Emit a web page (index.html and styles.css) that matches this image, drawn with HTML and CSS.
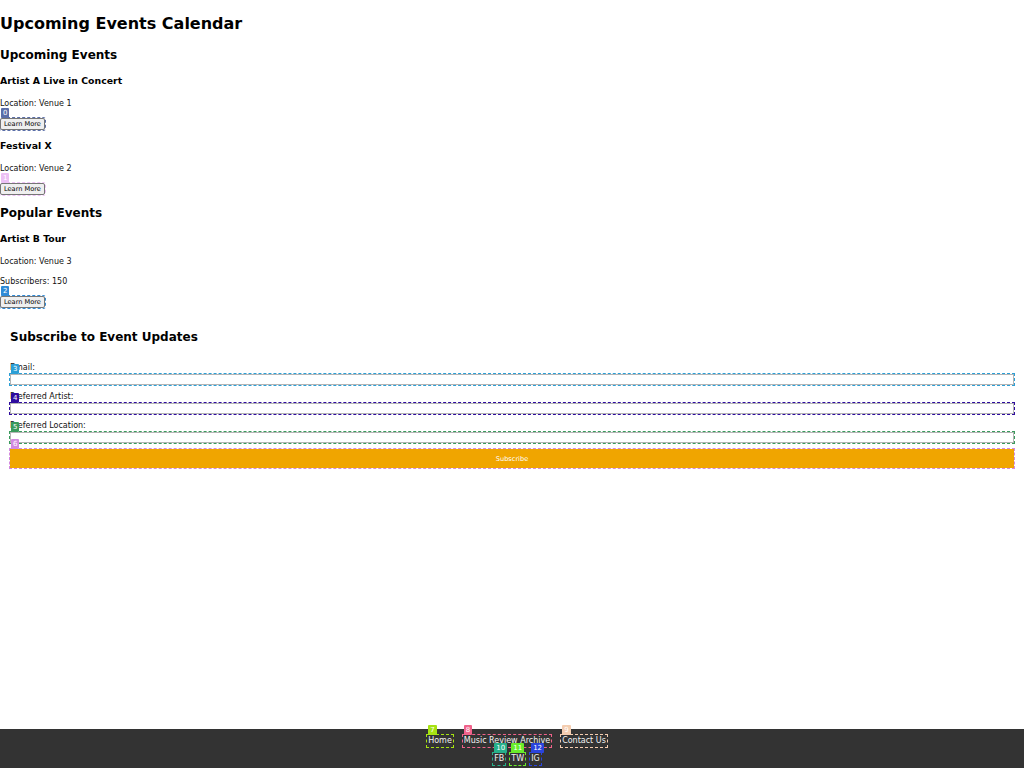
FILE: index.html
```html
<!DOCTYPE html>
<html lang="en">
<head>
<meta charset="utf-8">
<title>Upcoming Events Calendar</title>
<link rel="stylesheet" href="styles.css">
</head>
<body>
<div class="page">
<header class="page-header">
  <h1 class="title">Upcoming Events Calendar</h1>
</header>
<main class="content">
  <section class="events">
    <h2 class="section-title">Upcoming Events</h2>
    <div class="event">
      <h3 class="event-title">Artist A Live in Concert</h3>
      <p class="event-info">Location: Venue 1</p>
      <div class="mark m0"><button class="btn tgt" type="button">Learn More</button><span class="badge">0</span></div>
    </div>
    <div class="event">
      <h3 class="event-title">Festival X</h3>
      <p class="event-info">Location: Venue 2</p>
      <div class="mark m1"><button class="btn tgt" type="button">Learn More</button><span class="badge">1</span></div>
    </div>
  </section>
  <section class="events">
    <h2 class="section-title">Popular Events</h2>
    <div class="event">
      <h3 class="event-title">Artist B Tour</h3>
      <p class="event-info">Location: Venue 3</p>
      <p class="event-info">Subscribers: 150</p>
      <div class="mark m2"><button class="btn tgt" type="button">Learn More</button><span class="badge">2</span></div>
    </div>
  </section>
  <section class="subscribe">
    <h2 class="section-title">Subscribe to Event Updates</h2>
    <form class="sub-form">
      <label class="field-label" for="email">Email:</label>
      <div class="mark field m3"><input class="field-input tgt" id="email" type="email"><span class="badge">3</span></div>
      <label class="field-label" for="artist">Preferred Artist:</label>
      <div class="mark field m4"><input class="field-input tgt" id="artist" type="text"><span class="badge">4</span></div>
      <label class="field-label" for="location">Preferred Location:</label>
      <div class="mark field m5"><input class="field-input tgt" id="location" type="text"><span class="badge">5</span></div>
      <div class="mark field m6"><button class="submit tgt" type="button">Subscribe</button><span class="badge">6</span></div>
    </form>
  </section>
</main>
</div>
<footer class="page-footer">
  <nav class="foot-links">
    <span class="mark m7"><a class="foot-link tgt" href="#">Home</a><span class="badge">7</span></span>
    <span class="mark m8"><a class="foot-link tgt" href="#">Music Review Archive</a><span class="badge">8</span></span>
    <span class="mark m9"><a class="foot-link tgt" href="#">Contact Us</a><span class="badge">9</span></span>
  </nav>
  <div class="social">
    <span class="mark m10"><a class="foot-link tgt" href="#">FB</a><span class="badge">10</span></span>
    <span class="mark m11"><a class="foot-link tgt" href="#">TW</a><span class="badge">11</span></span>
    <span class="mark m12"><a class="foot-link tgt" href="#">IG</a><span class="badge">12</span></span>
  </div>
</footer>
</body>
</html>
```
FILE: styles.css
```css
html, body {
  margin: 0;
  padding: 0;
}
body {
  font-family: "DejaVu Sans", sans-serif;
  font-size: 8px;
  line-height: 1.5;
  color: #111;
  background: #fff;
  display: flex;
  flex-direction: column;
  min-height: 100vh;
}
.page {
  flex: 1 0 auto;
  display: block;
}
.title {
  font-size: 16px;
  margin: 11.7px 0 10.72px;
  color: #000;
}
.section-title {
  font-size: 12px;
  margin: 9.96px 0;
  color: #000;
}
.event-title {
  font-size: 9.36px;
  margin: 9.36px 0;
  color: #000;
}
.event-info {
  margin: 8px 0;
}
.mark {
  position: relative;
  display: flex;
}
.foot-links .mark,
.social .mark {
  display: inline-flex;
}
.badge {
  position: absolute;
  left: 1px;
  bottom: 100%;
  background: var(--c);
  color: #fff;
  font-size: 7px;
  line-height: 10px;
  height: 10px;
  padding: 0 2px;
  border-radius: 1px;
  white-space: nowrap;
}
.tgt {
  outline: 1.5px dashed var(--c);
  outline-offset: 0;
}
.m0 { --c: #5a6ea8; }
.m1 { --c: #ecc0f4; }
.m2 { --c: #2f8ad6; }
.m3 { --c: #2c9fd6; }
.m4 { --c: #2e0c9e; }
.m5 { --c: #3a9a5c; }
.m6 { --c: #d28ae0; }
.m7 { --c: #a6e212; }
.m8 { --c: #f0628a; }
.m9 { --c: #f4cdb0; }
.m10 { --c: #26b08a; }
.m11 { --c: #68ec2a; }
.m12 { --c: #2a44dc; }

.btn {
  font-family: "DejaVu Sans", sans-serif;
  font-size: 6.6px;
  line-height: 10px;
  height: 12px;
  padding: 0 3px;
  margin: 0;
  background: #efefef;
  color: #000;
  border: 1px solid #767676;
  border-radius: 2px;
}
.subscribe {
  padding: 10px;
}
.subscribe .section-title {
  margin: 10px 0 16px;
}
.sub-form {
  display: flex;
  flex-direction: column;
}
.field-label {
  display: block;
  line-height: 12px;
}
.field {
  margin-bottom: 5.5px;
}
.field-input {
  box-sizing: border-box;
  width: 100%;
  height: 11.5px;
  margin: 0;
  padding: 0 2px;
  border: 1px solid #b5b5b5;
  background: #fff;
  font-size: 7px;
}
.submit {
  box-sizing: border-box;
  width: 100%;
  height: 19.5px;
  margin: 0;
  border: none;
  background: #f0a500;
  color: #fff;
  font-family: "DejaVu Sans", sans-serif;
  font-size: 6.6px;
}
.page-footer {
  background: #333;
  color: #fff;
  padding: 6px 0 3px 10px;
  display: flex;
  flex-direction: column;
  gap: 6px;
}
.foot-links {
  display: flex;
  justify-content: center;
  gap: 10px;
}
.social {
  display: flex;
  justify-content: center;
  gap: 5px;
}
.foot-link {
  color: #f2f2f2;
  text-decoration: none;
  line-height: 12px;
  padding: 0 1px;
}
```
